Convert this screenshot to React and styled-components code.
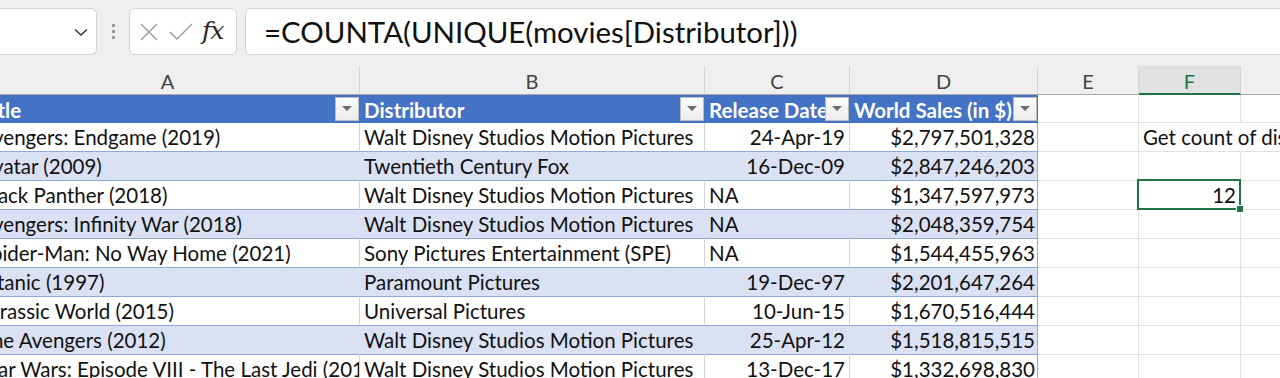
import React from "react";
import styled, { createGlobalStyle } from "styled-components";

const GlobalStyle = createGlobalStyle`
  html, body {
    margin: 0;
    padding: 0;
    background: #ffffff;
    overflow: hidden;
  }
  body {
    font-family: Lato, "Liberation Sans", sans-serif;
  }
`;

const COLS = "384px 345px 145px 188px 101px 102px 102px 102px";

// Formula bar
const Toolbar = styled.div`
  display: flex;
  align-items: flex-start;
  height: 66px;
  padding-top: 8px;
  box-sizing: border-box;
  background: #efefef;
`;

const NameBox = styled.div`
  width: 97px;
  height: 47px;
  box-sizing: border-box;
  background: #fff;
  border: 1px solid #d3d3d3;
  border-left: none;
  border-radius: 0 6px 6px 0;
  display: flex;
  align-items: center;
  justify-content: flex-end;
  padding-right: 6px;
`;

const Grip = styled.div`
  width: 32px;
  height: 47px;
  display: flex;
  flex-direction: column;
  align-items: center;
  justify-content: center;
  gap: 3px;
`;

const GripDot = styled.span`
  width: 3px;
  height: 3px;
  background: #9a9a9a;
`;

const Commands = styled.div`
  width: 108px;
  height: 47px;
  box-sizing: border-box;
  background: #fff;
  border: 1px solid #d3d3d3;
  border-radius: 6px;
  display: flex;
  align-items: center;
  padding-left: 8px;
  gap: 8px;
`;

const Fx = styled.span`
  font-family: "DejaVu Serif", "Liberation Serif", serif;
  font-style: italic;
  font-size: 25px;
  color: #2a2a2a;
  margin-top: -3px;
  letter-spacing: -1px;
`;

const FormulaBox = styled.div`
  flex: 1;
  height: 47px;
  margin-left: 8px;
  margin-right: -10px;
  box-sizing: border-box;
  background: #fff;
  border: 1px solid #d3d3d3;
  border-radius: 6px;
  display: flex;
  align-items: center;
  padding-left: 18px;
  font-size: 29.4px;
  color: #111;
`;

// Sheet
const Sheet = styled.div`
  overflow: hidden;
  width: 1280px;
`;

const Grid = styled.div`
  margin-left: -24px;
  width: 1420px;
`;

const Row = styled.div`
  display: grid;
  grid-template-columns: ${COLS};
  height: ${(p) => p.$h || 29}px;
`;

const ColHead = styled.div`
  box-sizing: border-box;
  display: flex;
  align-items: center;
  justify-content: center;
  background: ${(p) => (p.$active ? "#e1e1e1" : "#efefef")};
  color: ${(p) => (p.$active ? "#217346" : "#444")};
  border-right: 1px solid #d5d5d5;
  border-bottom: ${(p) => (p.$active ? "2px solid #217346" : "1px solid #a8a8a8")};
  font-size: 20px;
  padding-top: 2px;
`;

const HeadCell = styled.div`
  box-sizing: border-box;
  display: flex;
  align-items: center;
  background: #4472c4;
  border-bottom: 1px solid #4472c4;
  color: #fff;
  font-weight: bold;
  font-size: 20.5px;
  padding-left: 4px;
  overflow: hidden;
  white-space: nowrap;
`;

const HeadLabel = styled.span`
  flex: 1;
  overflow: hidden;
  padding-top: 2px;
`;

const FilterButton = styled.span`
  flex-shrink: 0;
  width: 24px;
  height: 24px;
  box-sizing: border-box;
  margin-right: 1px;
  border: 1px solid #bcbcbc;
  background: linear-gradient(#fbfbfb, #ececec);
  display: flex;
  align-items: center;
  justify-content: center;
  &::after {
    content: "";
    border-left: 5px solid transparent;
    border-right: 5px solid transparent;
    border-top: 5px solid #6b6b6b;
  }
`;

const gridLine = (p) => {
  if (p.$clear) return "#fff";
  if (p.$edge) return "#8ea9db";
  if (p.$table) return p.$band ? "#d9e1f2" : "#d4d4d4";
  return "#e1e1e1";
};

const Cell = styled.div`
  position: relative;
  z-index: ${(p) => (p.$spill ? 2 : "auto")};
  box-sizing: border-box;
  display: flex;
  align-items: flex-end;
  justify-content: ${(p) => (p.$right ? "flex-end" : "flex-start")};
  padding: 0 ${(p) => (p.$edge ? 2 : 4)}px 0 4px;
  font-size: 20.5px;
  color: #111;
  white-space: nowrap;
  overflow: ${(p) => (p.$spill ? "visible" : "hidden")};
  background: ${(p) => (p.$band ? "#d9e1f2" : "#fff")};
  border-bottom: 1px solid ${(p) => (p.$table ? "#8ea9db" : "#e1e1e1")};
  border-right: 1px solid ${gridLine};
  line-height: 28px;
`;

const Selected = styled.span`
  position: absolute;
  left: -2px;
  top: -2px;
  right: -1px;
  bottom: -1px;
  border: 2px solid #217346;
  pointer-events: none;
  &::after {
    content: "";
    position: absolute;
    right: -5px;
    bottom: -5px;
    width: 6px;
    height: 6px;
    background: #217346;
    border: 1px solid #fff;
  }
`;

const movies = [
  ["Avengers: Endgame (2019)", "Walt Disney Studios Motion Pictures", "24-Apr-19", "$2,797,501,328"],
  ["Avatar (2009)", "Twentieth Century Fox", "16-Dec-09", "$2,847,246,203"],
  ["Black Panther (2018)", "Walt Disney Studios Motion Pictures", "NA", "$1,347,597,973"],
  ["Avengers: Infinity War (2018)", "Walt Disney Studios Motion Pictures", "NA", "$2,048,359,754"],
  ["Spider-Man: No Way Home (2021)", "Sony Pictures Entertainment (SPE)", "NA", "$1,544,455,963"],
  ["Titanic (1997)", "Paramount Pictures", "19-Dec-97", "$2,201,647,264"],
  ["Jurassic World (2015)", "Universal Pictures", "10-Jun-15", "$1,670,516,444"],
  ["The Avengers (2012)", "Walt Disney Studios Motion Pictures", "25-Apr-12", "$1,518,815,515"],
  ["Star Wars: Episode VIII - The Last Jedi (2017)", "Walt Disney Studios Motion Pictures", "13-Dec-17", "$1,332,698,830"],
];

const headers = ["Title", "Distributor", "Release Date", "World Sales (in $)"];
const letters = ["A", "B", "C", "D", "E", "F", "G", "H"];

const ChevronIcon = () => (
  <svg width="18" height="18" viewBox="0 0 18 18">
    <path d="M3 6.5 L9 12 L15 6.5" fill="none" stroke="#3a3a3a" strokeWidth="1.6" />
  </svg>
);

const CrossIcon = () => (
  <svg width="22" height="22" viewBox="0 0 22 22">
    <path d="M3 3 L19 19 M19 3 L3 19" stroke="#9a9a9a" strokeWidth="1.4" />
  </svg>
);

const CheckIcon = () => (
  <svg width="26" height="22" viewBox="0 0 26 22">
    <path d="M2 11 L9 18 L24 3" fill="none" stroke="#9a9a9a" strokeWidth="1.4" />
  </svg>
);

const App = () => {
  return (
    <>
      <GlobalStyle />
      <Toolbar>
        <NameBox>
          <ChevronIcon />
        </NameBox>
        <Grip>
          <GripDot />
          <GripDot />
          <GripDot />
        </Grip>
        <Commands>
          <CrossIcon />
          <CheckIcon />
          <Fx>fx</Fx>
        </Commands>
        <FormulaBox>=COUNTA(UNIQUE(movies[Distributor]))</FormulaBox>
      </Toolbar>

      <Sheet>
        <Grid>
          <Row $h={29}>
            {letters.map((l) => (
              <ColHead key={l} $active={l === "F"}>
                {l}
              </ColHead>
            ))}
          </Row>

          <Row $h={28}>
            {headers.map((h) => (
              <HeadCell key={h}>
                <HeadLabel>{h}</HeadLabel>
                <FilterButton />
              </HeadCell>
            ))}
            <Cell />
            <Cell />
            <Cell />
            <Cell />
          </Row>

          {movies.map((m, i) => {
            const band = i % 2 === 1;
            const isNA = m[2] === "NA";
            return (
              <Row key={m[0]}>
                <Cell $table $band={band}>{m[0]}</Cell>
                <Cell $table $band={band}>{m[1]}</Cell>
                <Cell $table $band={band} $right={!isNA}>{m[2]}</Cell>
                <Cell $table $band={band} $edge $right>{m[3]}</Cell>
                <Cell />
                {i === 0 && (
                  <Cell $spill $clear>
                    Get count of distinct distributors
                  </Cell>
                )}
                {i === 2 && (
                  <Cell $right $spill>
                    12
                    <Selected />
                  </Cell>
                )}
                {i !== 0 && i !== 2 && <Cell />}
                <Cell $clear={i === 0} />
                <Cell $clear={i === 0} />
              </Row>
            );
          })}
        </Grid>
      </Sheet>
    </>
  );
};

export default App;
